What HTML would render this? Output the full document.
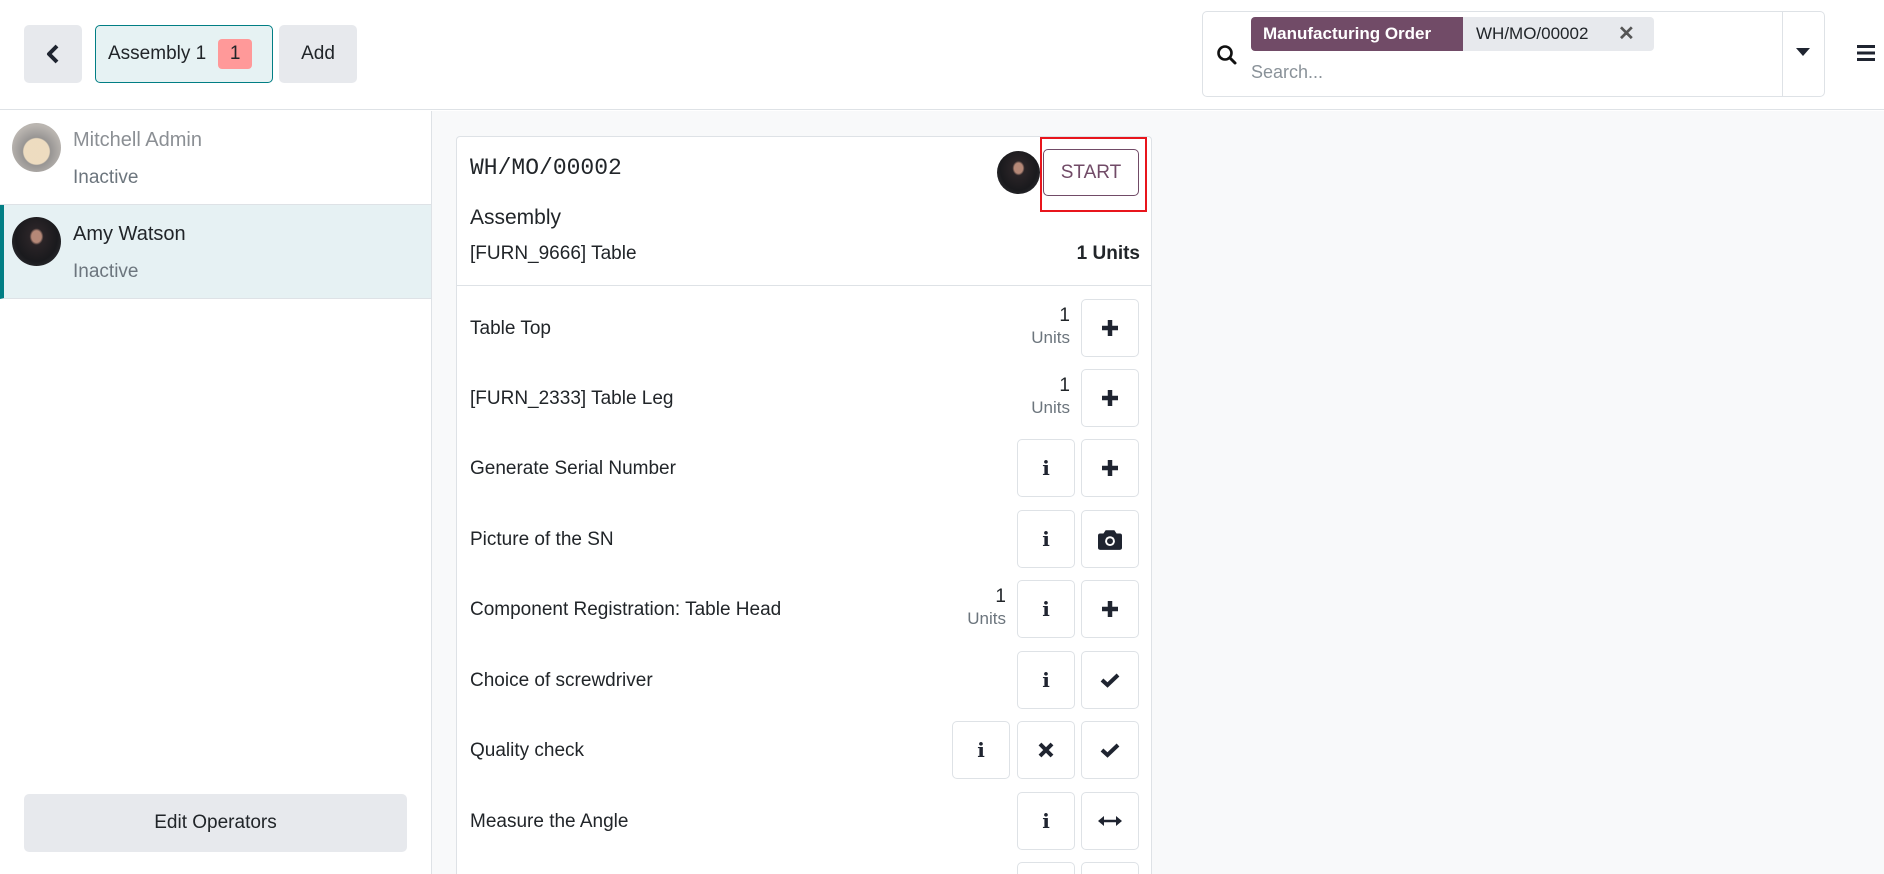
<!DOCTYPE html>
<html style="overflow:hidden;width:1884px;height:874px"><head><meta charset="utf-8"><style>
*{box-sizing:border-box;margin:0;padding:0}
body{width:1884px;height:874px;overflow:hidden;background:#fff;font-family:"Liberation Sans",sans-serif;color:#212529;position:relative}
.abs{position:absolute}
.hdr{left:0;top:0;width:1884px;height:110px;background:#fff;border-bottom:1px solid #dee2e6}
.btn{position:absolute;border-radius:5px;display:flex;align-items:center;justify-content:center;font-size:19px}
.side{left:0;top:111px;width:432px;height:763px;background:#fff;border-right:1px solid #dee2e6}
.main{left:432px;top:111px;width:1452px;height:763px;background:#f8f9fa}
.op{position:absolute;left:0;width:431px;height:94px;border-bottom:1px solid #dee2e6}
.av{position:absolute;left:12px;top:12px;width:49px;height:49px;border-radius:50%}
.nm{position:absolute;left:73px;top:18px;font-size:20px}
.st{position:absolute;left:73px;top:56px;font-size:19px;color:#6c757d}
.card{left:456px;top:136px;width:696px;background:#fff;border:1px solid #dee2e6;border-radius:4px}
.row{position:absolute;left:0;width:694px;height:58px}
.lbl{position:absolute;left:13px;top:1px;line-height:58px;font-size:19px}
.ib{position:absolute;top:0;width:58px;height:58px;border:1px solid #dee2e6;border-radius:5px;background:#fff;display:flex;align-items:center;justify-content:center}
.b1{left:624px}.b2{left:560px}.b3{left:495px}
.qty{position:absolute;top:6px;text-align:right;font-size:19px;line-height:22px}
.qty span{display:block;font-size:17px;color:#6c757d}
.i{font-family:"DejaVu Serif",serif;font-weight:bold;font-size:20px;color:#1f2430}
</style></head><body>
<div class="abs hdr"></div>
<div class="btn" style="left:24px;top:25px;width:58px;height:58px;background:#e7e9ed">
<svg width="16" height="20" viewBox="0 0 16 20"><path d="M12 2 L4 10 L12 18" fill="none" stroke="#1f2430" stroke-width="4" stroke-linejoin="round"/></svg></div>
<div class="btn" style="left:95px;top:25px;width:178px;height:58px;background:#e6f2f3;border:1px solid #017e84;justify-content:flex-start;padding-left:12px">Assembly 1<span style="margin-left:12px;background:#f99;border-radius:4px;width:34px;height:30px;display:flex;align-items:center;justify-content:center">1</span></div>
<div class="btn" style="left:279px;top:25px;width:78px;height:58px;background:#e7e9ed">Add</div>

<div class="abs" style="left:1202px;top:11px;width:623px;height:86px;border:1px solid #dee2e6;border-radius:5px;background:#fff"></div>
<svg class="abs" style="left:1216px;top:44px" width="22" height="22" viewBox="0 0 22 22"><circle cx="9" cy="9" r="6.5" fill="none" stroke="#111" stroke-width="2.6"/><path d="M14 14 L19 19" stroke="#111" stroke-width="3" stroke-linecap="round"/></svg>
<div class="abs" style="left:1251px;top:17px;width:212px;height:34px;background:#714b67;color:#fff;font-weight:bold;font-size:17px;line-height:34px;padding-left:12px;border-radius:4px 0 0 4px">Manufacturing Order</div>
<div class="abs" style="left:1463px;top:17px;width:191px;height:34px;background:#e7e9ed;font-size:17px;line-height:34px;padding-left:13px;border-radius:0 4px 4px 0">WH/MO/00002<span style="position:absolute;left:155px;top:0;font-weight:bold;color:#555;font-size:20px">✕</span></div>
<div class="abs" style="left:1251px;top:62px;font-size:18px;color:#8a9299">Search...</div>
<div class="abs" style="left:1782px;top:12px;width:1px;height:84px;background:#dee2e6"></div>
<svg class="abs" style="left:1796px;top:48px" width="14" height="9" viewBox="0 0 14 9"><path d="M0 0H14L7 8Z" fill="#1f2430"/></svg>
<svg class="abs" style="left:1857px;top:45px" width="18" height="16" viewBox="0 0 18 16"><rect y="0" width="18" height="3" fill="#1f2430"/><rect y="6.5" width="18" height="3" fill="#1f2430"/><rect y="13" width="18" height="3" fill="#1f2430"/></svg>

<div class="abs side">
<div class="op" style="top:0">
<div class="av" style="background:radial-gradient(circle at 50% 58%,#e9d3b0 0 34%,#7d7a78 37%,#a9a39d 70%);opacity:.8"></div>
<div class="nm" style="color:#8b8f94">Mitchell Admin</div><div class="st">Inactive</div></div>
<div class="op" style="top:94px;background:#e6f1f3;border-left:4px solid #017e84">
<div class="av" style="left:8px;background:radial-gradient(ellipse at 50% 40%,#b58877 0 14%,#2a2427 20%,#1a1a1d 60%,#3a3a3e 100%)"></div>
<div class="nm" style="left:69px;color:#212529">Amy Watson</div><div class="st" style="left:69px">Inactive</div></div>
<div class="btn" style="left:24px;top:683px;width:383px;height:58px;background:#e7e9ed">Edit Operators</div>
</div>
<div class="abs main"></div>

<div class="abs card" style="height:738px;overflow:hidden;border-bottom:none;border-radius:4px 4px 0 0">
<div class="abs" style="left:13px;top:18px;font-family:'Liberation Mono',monospace;font-size:23px">WH/MO/00002</div>
<div class="abs" style="left:540px;top:14px;width:43px;height:43px;border-radius:50%;background:radial-gradient(ellipse at 50% 40%,#b58877 0 14%,#2a2427 20%,#1a1a1d 60%,#3a3a3e 100%)"></div>
<div class="abs" style="left:586px;top:12px;width:96px;height:47px;border:1px solid #714b67;border-radius:5px;color:#714b67;font-size:19px;display:flex;align-items:center;justify-content:center">START</div>
<div class="abs" style="left:583px;top:0px;width:107px;height:75px;border:2px solid #e8151c"></div>
<div class="abs" style="left:13px;top:69px;font-size:21px">Assembly</div>
<div class="abs" style="left:13px;top:106px;font-size:19px">[FURN_9666] Table</div>
<div class="abs" style="right:11px;top:106px;font-size:19px;font-weight:bold">1 Units</div>
<div class="abs" style="left:0;top:148px;width:694px;height:1px;background:#dee2e6"></div>

<div class="row" style="top:162px"><div class="lbl">Table Top</div><div class="qty" style="right:81px">1<span>Units</span></div><div class="ib b1"><svg width="20" height="20" viewBox="0 0 20 20"><path d="M10 2V18M2 10H18" stroke="#1f2430" stroke-width="4.5"/></svg></div></div>
<div class="row" style="top:232px"><div class="lbl">[FURN_2333] Table Leg</div><div class="qty" style="right:81px">1<span>Units</span></div><div class="ib b1"><svg width="20" height="20" viewBox="0 0 20 20"><path d="M10 2V18M2 10H18" stroke="#1f2430" stroke-width="4.5"/></svg></div></div>
<div class="row" style="top:302px"><div class="lbl">Generate Serial Number</div><div class="ib b2"><span class="i">i</span></div><div class="ib b1"><svg width="20" height="20" viewBox="0 0 20 20"><path d="M10 2V18M2 10H18" stroke="#1f2430" stroke-width="4.5"/></svg></div></div>
<div class="row" style="top:373px"><div class="lbl">Picture of the SN</div><div class="ib b2"><span class="i">i</span></div><div class="ib b1"><svg width="24" height="21" viewBox="0 0 22 19"><path d="M7 1H15L17 4H20Q22 4 22 6V17Q22 19 20 19H2Q0 19 0 17V6Q0 4 2 4H5Z" fill="#1f2430"/><circle cx="11" cy="11" r="4.5" fill="#fff"/><circle cx="11" cy="11" r="2.7" fill="#1f2430"/></svg></div></div>
<div class="row" style="top:443px"><div class="lbl">Component Registration: Table Head</div><div class="qty" style="right:145px">1<span>Units</span></div><div class="ib b2"><span class="i">i</span></div><div class="ib b1"><svg width="20" height="20" viewBox="0 0 20 20"><path d="M10 2V18M2 10H18" stroke="#1f2430" stroke-width="4.5"/></svg></div></div>
<div class="row" style="top:514px"><div class="lbl">Choice of screwdriver</div><div class="ib b2"><span class="i">i</span></div><div class="ib b1"><svg width="20" height="16" viewBox="0 0 20 16"><path d="M2 8L7.5 13L18 3" fill="none" stroke="#1f2430" stroke-width="4"/></svg></div></div>
<div class="row" style="top:584px"><div class="lbl">Quality check</div><div class="ib b3"><span class="i">i</span></div><div class="ib b2"><svg width="16" height="16" viewBox="0 0 16 16"><path d="M2 2L14 14M14 2L2 14" stroke="#1f2430" stroke-width="4"/></svg></div><div class="ib b1"><svg width="20" height="16" viewBox="0 0 20 16"><path d="M2 8L7.5 13L18 3" fill="none" stroke="#1f2430" stroke-width="4"/></svg></div></div>
<div class="row" style="top:655px"><div class="lbl">Measure the Angle</div><div class="ib b2"><span class="i">i</span></div><div class="ib b1"><svg width="24" height="12" viewBox="0 0 24 12"><path d="M4 6H20" stroke="#1f2430" stroke-width="2.5"/><path d="M0 6L6 1V11Z M24 6L18 1V11Z" fill="#1f2430"/></svg></div></div>
<div class="row" style="top:725px;height:13px;overflow:hidden"><div class="ib b2"></div><div class="ib b1"></div></div>
</div>
</body></html>
